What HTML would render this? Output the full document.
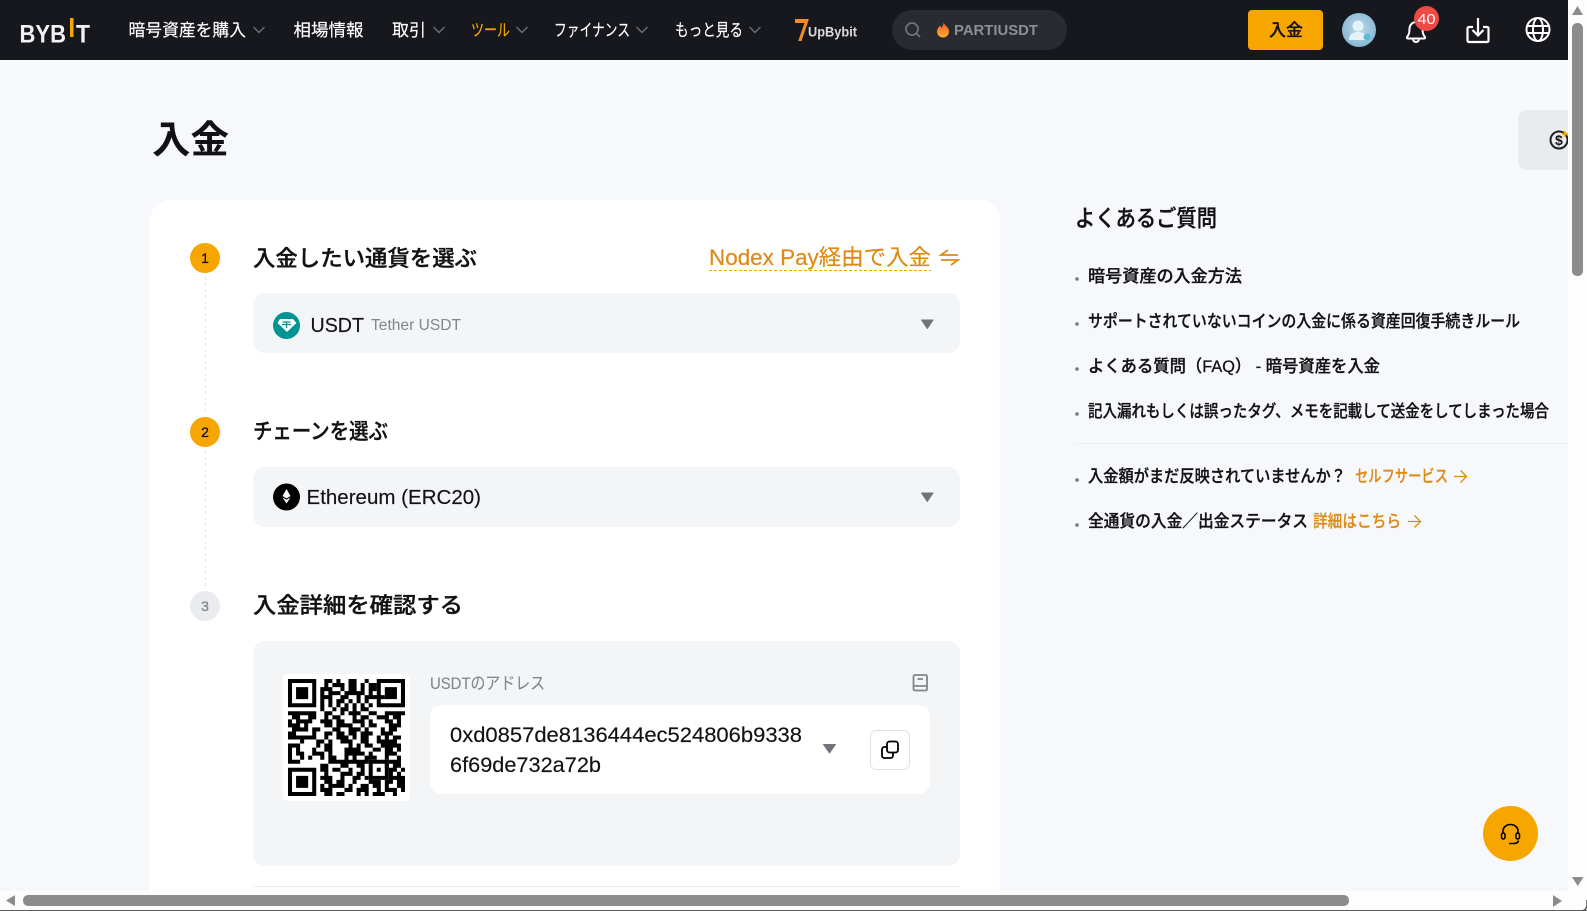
<!DOCTYPE html>
<html lang="ja">
<head>
<meta charset="utf-8">
<title>入金</title>
<style>
html,body{margin:0;padding:0;width:1587px;height:911px;overflow:hidden;background:#f6f8fc}
svg{display:block}
text{font-family:"Liberation Sans","Noto Sans CJK JP",sans-serif;fill:#121214;white-space:pre}
.nav{font-size:17px;fill:#fff;stroke:#fff;stroke-width:.15px}
.st{font-size:22px;font-weight:500;stroke:#121214;stroke-width:.35px}
.fq{font-size:17px;font-weight:500;stroke:#121214;stroke-width:.3px}
.or{fill:#de8a14;stroke:#de8a14;stroke-width:.2px}
</style>
</head>
<body>
<svg width="1587" height="911" viewBox="0 0 1587 911" xmlns="http://www.w3.org/2000/svg">
<defs>
<radialGradient id="av" cx=".5" cy=".45" r=".6"><stop offset="0" stop-color="#b9d8ea"/><stop offset=".8" stop-color="#8fbdd6"/><stop offset="1" stop-color="#6fa3bd"/></radialGradient>
<linearGradient id="fl" x1="0" y1="0" x2="0" y2="1"><stop offset="0" stop-color="#f0552a"/><stop offset="1" stop-color="#ffb02e"/></linearGradient>
</defs>
<rect width="1587" height="911" fill="#f6f8fc"/>

<!-- nav -->
<rect width="1568" height="60" fill="#17181e"/>
<text x="19.500" y="42.500" font-size="25" font-weight="700" style="fill:#f2f2f2" textLength="46.500" lengthAdjust="spacingAndGlyphs">BYB</text>
<rect x="70" y="18" width="3.500" height="19" fill="#f7a600"/>
<text x="76" y="42.500" font-size="25" font-weight="700" style="fill:#f2f2f2" textLength="14" lengthAdjust="spacingAndGlyphs">T</text>
<text class="nav" x="128.500" y="36" textLength="117.500" lengthAdjust="spacingAndGlyphs">暗号資産を購入</text>
<text class="nav" x="293.500" y="36" textLength="70" lengthAdjust="spacingAndGlyphs">相場情報</text>
<text class="nav" x="392" y="36" textLength="34" lengthAdjust="spacingAndGlyphs">取引</text>
<text class="nav" x="471" y="36" textLength="39" lengthAdjust="spacingAndGlyphs" style="fill:#f7a600;stroke:#f7a600">ツール</text>
<text class="nav" x="554" y="36" textLength="76" lengthAdjust="spacingAndGlyphs">ファイナンス</text>
<text class="nav" x="675" y="36" textLength="68" lengthAdjust="spacingAndGlyphs">もっと見る</text>
<g fill="none" stroke="#6d7077" stroke-width="1.400">
<path d="M253.500 27l5.500 5.500 5.500-5.500"/>
<path d="M433.500 27l5.500 5.500 5.500-5.500"/>
<path d="M516.500 27l5.500 5.500 5.500-5.500"/>
<path d="M636.500 27l5.500 5.500 5.500-5.500"/>
<path d="M749.500 27l5.500 5.500 5.500-5.500"/>
</g>
<path d="M795 19h13.500v1.500L801.500 41h-3.300l6.300-18H795z" fill="#f28c28"/>
<text x="808" y="36.500" font-size="13.500" font-weight="700" style="fill:#dcdcdc" textLength="49" lengthAdjust="spacingAndGlyphs">UpBybit</text>
<rect x="892" y="10" width="175" height="40" rx="20" fill="#2a2b31"/>
<circle cx="912" cy="29" r="6" fill="none" stroke="#71757a" stroke-width="1.700"/>
<path d="M916.500 33.500l3.500 3.500" stroke="#71757a" stroke-width="1.700" fill="none"/>
<path d="M943.500 22c.5 3 5.500 5 5.500 9.500a6 6 0 0 1-12 0c0-3 2-4 2.500-6 1 .6 1.500 1.500 1.700 2.500 1.300-1.500 2.500-3.500 2.300-6z" fill="url(#fl)"/>
<text x="954" y="35" font-size="14.500" font-weight="700" style="fill:#8b8f98" textLength="84" lengthAdjust="spacingAndGlyphs">PARTIUSDT</text>
<rect x="1248" y="10" width="75" height="40" rx="4" fill="#f7a600"/>
<text x="1269" y="36" font-size="17" font-weight="500" style="stroke:#121214;stroke-width:.3px" textLength="34" lengthAdjust="spacingAndGlyphs">入金</text>
<circle cx="1359" cy="30" r="17" fill="url(#av)"/>
<circle cx="1358" cy="26" r="5.500" fill="#e6f2fa"/>
<path d="M1349 40c0-6 4-8 9-8s9 2 9 8z" fill="#e6f2fa"/>
<circle cx="1367" cy="37" r="3.500" fill="#5cbcd6"/>
<path d="M1407 37c2-2 2.500-4 2.500-8 0-4 3-7 6.500-7s6.500 3 6.500 7c0 4 .5 6 2.500 8 .5.800 0 1.500-1 1.500h-16c-1 0-1.500-.7-1-1.500zM1413 39c.3 2 1.500 3 3 3s2.700-1 3-3" fill="none" stroke="#fff" stroke-width="2"/>
<circle cx="1426.500" cy="18.500" r="12.500" fill="#f04a46"/>
<text x="1417.500" y="24" font-size="14.500" style="fill:#fff" textLength="18" lengthAdjust="spacingAndGlyphs">40</text>
<path d="M1473 27h-4a1.500 1.500 0 0 0-1.500 1.500v12a1.500 1.500 0 0 0 1.500 1.500h18a1.500 1.500 0 0 0 1.500-1.500v-12a1.500 1.500 0 0 0-1.500-1.500h-4M1478 18v17M1472.500 30l5.500 5.500 5.500-5.500" fill="none" stroke="#fff" stroke-width="2.200"/>
<g fill="none" stroke="#fff" stroke-width="2"><circle cx="1538" cy="29.500" r="11.500"/><ellipse cx="1538" cy="29.500" rx="5" ry="11.500"/><path d="M1527 26h22M1527 33h22"/></g>

<!-- side tab -->
<path d="M1568 110h-40a10 10 0 0 0-10 10v40a10 10 0 0 0 10 10h40z" fill="#e9ebef"/>
<circle cx="1559" cy="140" r="8.500" fill="none" stroke="#1f2026" stroke-width="2"/>
<text x="1555" y="145" font-size="14" font-weight="700">$</text>
<path d="M1564.800 131v6M1562 134h6" stroke="#f7a600" stroke-width="1.700" fill="none"/>

<text x="152" y="153" font-size="38" font-weight="700" textLength="77" lengthAdjust="spacingAndGlyphs">入金</text>

<!-- card -->
<path d="M150 891V220a20 20 0 0 1 20-20h810a20 20 0 0 1 20 20v671z" fill="#fff"/>

<!-- stepper -->
<path d="M205.500 277V413M205.500 451V587" stroke="#e5e7ea" stroke-dasharray="3 3" fill="none"/>
<circle cx="205" cy="258" r="15" fill="#f7a600"/>
<text x="205" y="263" font-size="14" font-weight="400" style="stroke:#121214;stroke-width:.3px" text-anchor="middle">1</text>
<circle cx="205" cy="432" r="15" fill="#f7a600"/>
<text x="205" y="437" font-size="14" font-weight="400" style="stroke:#121214;stroke-width:.3px" text-anchor="middle">2</text>
<circle cx="205" cy="606" r="15" fill="#e9ebef"/>
<text x="205" y="611" font-size="14" font-weight="400" text-anchor="middle" style="fill:#81858c;stroke:#81858c;stroke-width:.3px">3</text>

<text class="st" x="253" y="266" textLength="224" lengthAdjust="spacingAndGlyphs">入金したい通貨を選ぶ</text>
<text x="709" y="265" font-size="22" class="or" textLength="222" lengthAdjust="spacingAndGlyphs">Nodex Pay経由で入金</text>
<path d="M709 270.500H931" stroke="#f7a600" stroke-dasharray="3 2" fill="none"/>
<path d="M948 250l-7 5h17M941 260h17l-7 5" fill="none" stroke="#de8a14" stroke-width="1.800"/>

<rect x="253" y="293" width="707" height="60" rx="12" fill="#f3f5f7"/>
<circle cx="286.500" cy="325.500" r="13.500" fill="#009393"/>
<path d="M280 319h13l3.500 4-9.500 9-9.500-9z" fill="#fff"/>
<path d="M282.500 322h8M286.500 322v6M282 324.500h9" stroke="#009393" stroke-width="1.300" fill="none"/>
<text x="310.500" y="332" font-size="20.500" style="stroke:#121214;stroke-width:.15px" textLength="53.500" lengthAdjust="spacingAndGlyphs">USDT</text>
<text x="371" y="330" font-size="16" style="fill:#81858c" textLength="90" lengthAdjust="spacingAndGlyphs">Tether USDT</text>
<path d="M921.500 320h11.500l-5.700 8.500z" fill="#71757a" stroke="#71757a" stroke-linejoin="round"/>

<text class="st" x="253" y="439" textLength="135" lengthAdjust="spacingAndGlyphs">チェーンを選ぶ</text>
<rect x="253" y="467" width="707" height="60" rx="12" fill="#f3f5f7"/>
<circle cx="286.500" cy="497" r="13.500" fill="#000"/>
<path d="M286.500 489l4 7-4 2.500-4-2.500zM286.500 499.800l4-2.300-4 6-4-6z" fill="#fff"/>
<text x="306.500" y="504" font-size="20.500" style="stroke:#121214;stroke-width:.15px" textLength="174.500" lengthAdjust="spacingAndGlyphs">Ethereum (ERC20)</text>
<path d="M921.500 493h11.500l-5.700 8.500z" fill="#71757a" stroke="#71757a" stroke-linejoin="round"/>

<text class="st" x="253" y="613" textLength="210" lengthAdjust="spacingAndGlyphs">入金詳細を確認する</text>
<rect x="253" y="641" width="707" height="225" rx="12" fill="#f3f5f7"/>
<rect x="283" y="674" width="127" height="127" rx="4" fill="#fff"/>

<!-- QR -->
<svg x="288" y="679" width="117" height="117" viewBox="0 0 29 29">
<path fill="#000" fill-rule="evenodd" d="M0 0h7v7H0zM1 1v5h5V1zM2 2h3v3H2zM22 0h7v7h-7zM23 1v5h5V1zM24 2h3v3h-3zM0 22h7v7H0zM1 23v5h5v-5zM2 24h3v3H2zM20 20h5v5h-5zM21 21v3h3v-3zM22 22h1v1h-1z"/>
<path fill="none" stroke="#000" stroke-width="1" d="M9 .5h2m1 0h1m2 0h2m2 0h1
M9 1.500h1m1 0h3m1 0h2m1 0h1m1 0h2
M8 2.500h3m2 0h1m1 0h2m1 0h1m1 0h2
M8 3.500h1m1 0h3m1 0h5m1 0h1
M8 4.500h3m2 0h2m2 0h1m1 0h5
M8 5.500h1m1 0h1m1 0h2m1 0h1m1 0h1m1 0h1
M8 6.500h1m1 0h1m1 0h1m1 0h1m1 0h1m1 0h1m1 0h1
M8 7.500h1m2 0h1m1 0h2m1 0h1m1 0h2
M0 8.500h7m2 0h2m2 0h1m1 0h3m2 0h2m2 0h5
M1 9.500h2m2 0h2m2 0h1m1 0h2m3 0h1m1 0h2m2 0h3m1 0h2
M0 10.500h1m1 0h4m2 0h3m1 0h2m2 0h3m1 0h1m3 0h2m1 0h1m1 0h1
M0 11.500h3m1 0h1m4 0h2m1 0h4m2 0h1m1 0h2m3 0h3
M1 12.500h4m1 0h2m3 0h2m2 0h3m1 0h1m3 0h1m1 0h2
M0 13.500h2m4 0h1m2 0h2m1 0h2m1 0h2m1 0h3m2 0h3
M0 14.500h7m2 0h1m2 0h3m1 0h1m1 0h2m2 0h1m1 0h1m1 0h2
M3 15.500h1m3 0h2m1 0h1m2 0h3m2 0h2m2 0h5
M0 16.500h3m4 0h1m1 0h2m4 0h1m1 0h1m1 0h2m2 0h5
M0 17.500h1m1 0h1m3 0h1m2 0h2m3 0h4m3 0h2m1 0h2m1 0h1
M0 18.500h1m1 0h2m2 0h3m1 0h1m3 0h5m1 0h1m3 0h3
M0 19.500h1m2 0h1m1 0h1m2 0h1m1 0h2m2 0h1m1 0h1m2 0h3m2 0h1m2 0h1
M0 20.500h3m7 0h10m5 0h3
M8 21.500h2m3 0h2m2 0h2m5 0h1m1 0h2
M8 22.500h2m1 0h2m2 0h1m2 0h1m6 0h2m1 0h1
M9 23.500h1m3 0h3m1 0h2m6 0h1m1 0h1
M8 24.500h3m2 0h1m2 0h2m1 0h1m5 0h4
M9 25.500h2m1 0h2m2 0h1m3 0h3m1 0h2m1 0h2
M8 26.500h1m1 0h4m1 0h1m2 0h2m1 0h2m1 0h1m2 0h2
M8 27.500h3m3 0h2m1 0h3m2 0h1m1 0h3m1 0h1
M9 28.500h2m1 0h2m3 0h1m1 0h1m1 0h3m2 0h1"/>
</svg>

<text x="430" y="689" font-size="17" style="fill:#81858c;stroke:#81858c;stroke-width:.1px" textLength="115" lengthAdjust="spacingAndGlyphs">USDTのアドレス</text>
<g fill="none" stroke="#81858c" stroke-width="1.800"><rect x="913.500" y="675" width="13.500" height="15.500" rx="1.500"/><path d="M913.500 686h13.500M917.500 679h5.500"/></g>
<rect x="430" y="705" width="500" height="89" rx="12" fill="#fff"/>
<text x="450" y="742" font-size="21" style="stroke:#121214;stroke-width:.15px" textLength="352" lengthAdjust="spacingAndGlyphs">0xd0857de8136444ec524806b9338</text>
<text x="450" y="772" font-size="21" style="stroke:#121214;stroke-width:.15px" textLength="151" lengthAdjust="spacingAndGlyphs">6f69de732a72b</text>
<path d="M823.500 744.500h12l-6 8.500z" fill="#71757a" stroke="#71757a" stroke-linejoin="round"/>
<rect x="870.500" y="730.500" width="39" height="39" rx="6" fill="#fff" stroke="#dfe1e5"/>
<rect x="882" y="747" width="11" height="11" rx="2.500" fill="#fff" stroke="#000" stroke-width="1.800"/>
<rect x="887" y="741.500" width="11" height="11" rx="2.500" fill="#fff" stroke="#000" stroke-width="1.800"/>
<path d="M253 886.500H960" stroke="#eceef1"/>

<!-- FAQ -->
<text x="1075" y="226" font-size="23" font-weight="500" style="stroke:#121214;stroke-width:.35px" textLength="142" lengthAdjust="spacingAndGlyphs">よくあるご質問</text>
<g fill="#77797e">
<circle cx="1077" cy="279" r="1.800"/><circle cx="1077" cy="324" r="1.800"/><circle cx="1077" cy="369" r="1.800"/><circle cx="1077" cy="414" r="1.800"/><circle cx="1077" cy="480" r="1.800"/><circle cx="1077" cy="525" r="1.800"/>
</g>
<text class="fq" x="1088" y="282" textLength="154" lengthAdjust="spacingAndGlyphs">暗号資産の入金方法</text>
<text class="fq" x="1088" y="327" textLength="432" lengthAdjust="spacingAndGlyphs">サポートされていないコインの入金に係る資産回復手続きルール</text>
<text class="fq" x="1088" y="372" textLength="292" lengthAdjust="spacingAndGlyphs">よくある質問（FAQ） - 暗号資産を入金</text>
<text class="fq" x="1088" y="417" textLength="461" lengthAdjust="spacingAndGlyphs">記入漏れもしくは誤ったタグ、メモを記載して送金をしてしまった場合</text>
<path d="M1075 443.500H1568" stroke="#eceef2"/>
<text class="fq" x="1088" y="482" textLength="258" lengthAdjust="spacingAndGlyphs">入金額がまだ反映されていませんか？</text>
<text class="fq or" x="1355" y="482" font-weight="400" textLength="93" lengthAdjust="spacingAndGlyphs">セルフサービス</text>
<path d="M1454 476.500h12M1460.500 470.500l6 6-6 6" fill="none" stroke="#de8a14" stroke-width="1.300"/>
<text class="fq" x="1088" y="527" textLength="220" lengthAdjust="spacingAndGlyphs">全通貨の入金／出金ステータス</text>
<text class="fq or" x="1313" y="527" font-weight="400" textLength="88" lengthAdjust="spacingAndGlyphs">詳細はこちら</text>
<path d="M1408 521.500h12M1414.500 515.500l6 6-6 6" fill="none" stroke="#de8a14" stroke-width="1.300"/>

<!-- floating -->
<circle cx="1510.500" cy="833.500" r="27.500" fill="#f7a600"/>
<path d="M1503 833v-2a7.500 6.500 0 0 1 15 0v2M1509 843.500h5c2.500 0 4-1 4.500-3" fill="none" stroke="#000" stroke-width="1.600"/>
<rect x="1501.500" y="833" width="3.500" height="6" rx="1.700" fill="none" stroke="#000" stroke-width="1.500"/>
<rect x="1516" y="833" width="3.500" height="6" rx="1.700" fill="none" stroke="#000" stroke-width="1.500"/>

<!-- scrollbars -->
<rect x="1568" width="19" height="911" fill="#fdfdfd"/>
<rect y="891" width="1587" height="20" fill="#fdfdfd"/>
<path d="M1577.500 6l5.500 9h-11z" fill="#8c8c8c"/>
<rect x="1572" y="23" width="11" height="253" rx="5" fill="#8c8c8c"/>
<path d="M1572 877h11.500l-5.700 9z" fill="#8c8c8c"/>
<path d="M15 895v11l-9-5.500z" fill="#8c8c8c"/>
<rect x="23" y="895" width="1326" height="11" rx="5" fill="#8c8c8c"/>
<path d="M1553 895v12l9-6z" fill="#8c8c8c"/>
<path d="M0 910.500H1587" stroke="#5a5a5a"/>
<path d="M1587 900v5a6 6 0 0 1-6 6h-4" fill="none" stroke="#5a5a5a" stroke-width="1.500"/>
</svg>
</body>
</html>
